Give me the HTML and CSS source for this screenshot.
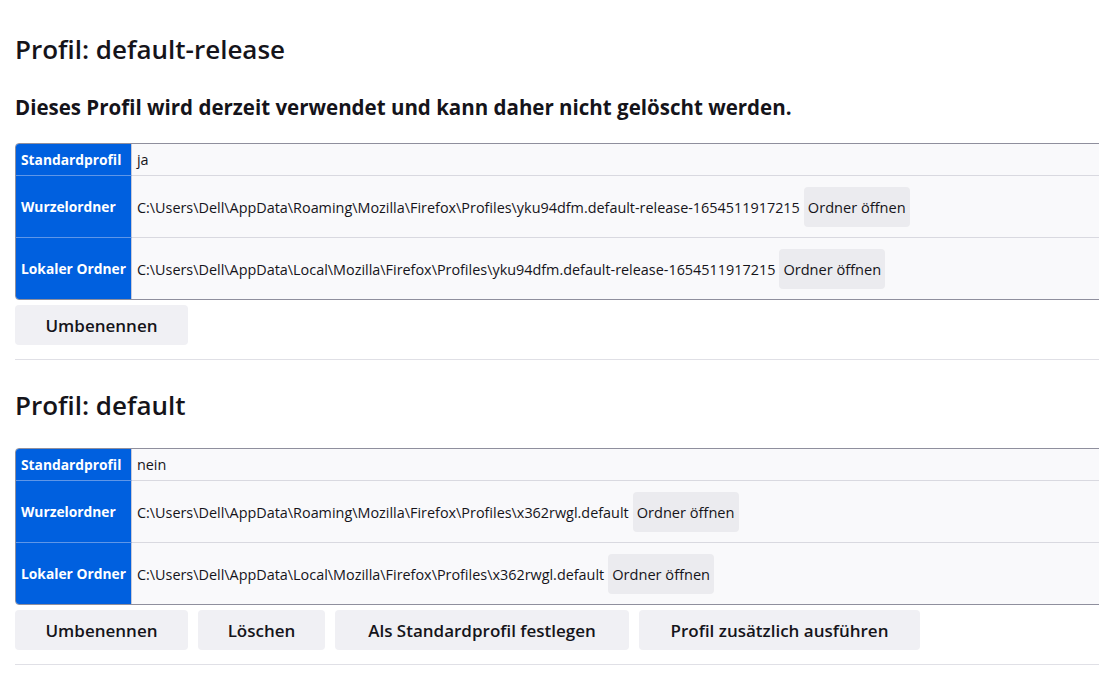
FILE: index.html
```html
<!DOCTYPE html>
<html lang="de">
<head>
<meta charset="utf-8">
<link rel="stylesheet" href="styles.css">
</head>
<body>
<div class="page">
  <section class="profile">
    <h2 class="title">Profil: default-release</h2>
    <h3 class="notice">Dieses Profil wird derzeit verwendet und kann daher nicht gelöscht werden.</h3>
    <table class="info">
      <tr class="short"><th>Standardprofil</th><td>ja</td></tr>
      <tr><th>Wurzelordner</th><td>C:\Users\Dell\AppData\Roaming\Mozilla\Firefox\Profiles\yku94dfm.default-release-1654511917215<button class="open">Ordner öffnen</button></td></tr>
      <tr><th>Lokaler Ordner</th><td>C:\Users\Dell\AppData\Local\Mozilla\Firefox\Profiles\yku94dfm.default-release-1654511917215<button class="open">Ordner öffnen</button></td></tr>
    </table>
    <div class="actions">
      <button class="act w-rename">Umbenennen</button>
    </div>
  </section>
  <section class="profile second">
    <h2 class="title">Profil: default</h2>
    <table class="info">
      <tr class="short"><th>Standardprofil</th><td>nein</td></tr>
      <tr><th>Wurzelordner</th><td>C:\Users\Dell\AppData\Roaming\Mozilla\Firefox\Profiles\x362rwgl.default<button class="open">Ordner öffnen</button></td></tr>
      <tr><th>Lokaler Ordner</th><td>C:\Users\Dell\AppData\Local\Mozilla\Firefox\Profiles\x362rwgl.default<button class="open">Ordner öffnen</button></td></tr>
    </table>
    <div class="actions">
      <button class="act w-rename">Umbenennen</button>
      <button class="act w-delete">Löschen</button>
      <button class="act w-default">Als Standardprofil festlegen</button>
      <button class="act w-launch">Profil zusätzlich ausführen</button>
    </div>
  </section>
</div>
</body>
</html>
```
FILE: styles.css
```css
html, body {
  margin: 0;
  padding: 0;
  background: #ffffff;
  overflow: hidden;
}
body {
  font-family: "Open Sans", "Noto Sans", sans-serif;
  color: #15141a;
}
.page {
  padding: 0 0 0 15px;
  width: 1120px;
}
.profile {
  border-bottom: 1px solid #e0e0e6;
  padding-bottom: 14px;
}
.title {
  font-size: 26px;
  font-weight: 600;
  margin: 0;
  padding-top: 30px;
  line-height: 38px;
}
.second .title {
  padding-top: 26px;
}
.notice {
  font-size: 20.5px;
  font-weight: 700;
  margin: 0;
  padding-top: 26px;
  line-height: 26px;
}
.info {
  border-collapse: separate;
  border-spacing: 0;
  border: 1px solid #8f8f9d;
  border-radius: 4px;
  width: 100%;
  margin-top: 23px;
  font-size: 14.4px;
}
.second .info {
  margin-top: 24px;
}
.info th {
  background: #0060df;
  color: #ffffff;
  font-weight: 700;
  font-size: 13.8px;
  text-align: left;
  padding: 0 5px;
  width: 104px;
  white-space: nowrap;
  border-right: 1px solid #c8c8d6;
  border-bottom: 1px solid #5e96e8;
}
.info td {
  background: #f9f9fb;
  padding: 0 0 0 5px;
  border-bottom: 1px solid #d9d9e0;
  white-space: nowrap;
}
.info tr:last-child th, .info tr:last-child td {
  border-bottom: none;
}
.info tr:first-child th { border-top-left-radius: 3px; }
.info tr:last-child th { border-bottom-left-radius: 3px; }
.info tr { height: 62px; }
.info tr.short { height: 32px; }
.info tr:last-child { height: 61px; }
.open {
  font-family: inherit;
  font-size: 14.6px;
  color: #15141a;
  background: #ebebef;
  border: none;
  border-radius: 4px;
  height: 40px;
  padding: 0 4px;
  margin-left: 4px;
  vertical-align: baseline;
}
.actions {
  display: flex;
  gap: 10px;
  margin-top: 5px;
}
.act {
  font-family: inherit;
  font-size: 17px;
  font-weight: 600;
  color: #15141a;
  background: #f0f0f4;
  border: none;
  border-radius: 4px;
  height: 40px;
  padding: 0;
}
.w-rename { width: 173px; }
.w-delete { width: 127px; }
.w-default { width: 294px; }
.w-launch { width: 281px; }
```
